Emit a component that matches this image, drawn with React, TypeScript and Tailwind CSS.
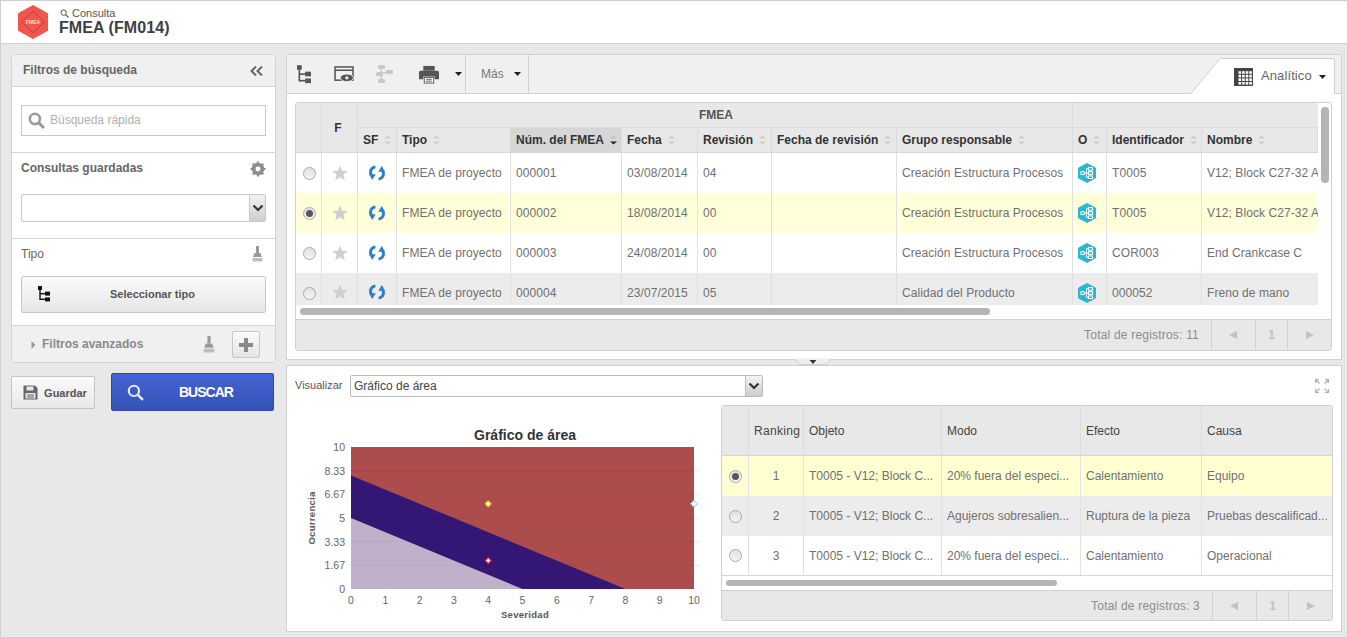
import React from "react";

function Sort({ active = false }: { active?: boolean }) {
  return (
    <svg width="9" height="10" viewBox="0 0 9 10" className="shrink-0">
      <path d="M4.5 0.5 L8 3.5 H1 Z" fill={active ? "#c4c4c4" : "#cccccc"} />
      <path d="M1 6.5 H8 L4.5 9.5 Z" fill={active ? "#222" : "#cccccc"} />
    </svg>
  );
}

function Radio({ on = false }: { on?: boolean }) {
  return (
    <span className="flex h-[13px] w-[13px] items-center justify-center rounded-full border border-[#a9a9a9] bg-linear-to-b from-[#e2e2e2] to-[#f4f4f4]">
      {on && <span className="h-[7px] w-[7px] rounded-full bg-[#555]" />}
    </span>
  );
}

function Star() {
  return (
    <svg width="16" height="16" viewBox="0 0 16 16">
      <path d="M8 0.5 L10.2 5.7 L15.7 6.1 L11.5 9.7 L12.8 15.2 L8 12.3 L3.2 15.2 L4.5 9.7 L0.3 6.1 L5.8 5.7 Z" fill="#cfcfcf" />
    </svg>
  );
}

function Sync() {
  return (
    <svg width="16" height="16" viewBox="0 0 17 18" fill="none" preserveAspectRatio="none" className="-ml-[1px]">
      <path d="M6.8 2.2 C2.2 3 0.4 7.4 2.6 11.5" stroke="#2d7fc9" strokeWidth="3.2" />
      <path d="M0 10.4 L7.2 10.4 L3.4 17 Z" fill="#2d7fc9" />
      <path d="M10.2 15.8 C14.8 15 16.6 10.6 14.4 6.5" stroke="#2d7fc9" strokeWidth="3.2" />
      <path d="M17 7.6 L9.8 7.6 L13.6 1 Z" fill="#2d7fc9" />
    </svg>
  );
}

function ObjIcon() {
  return (
    <svg width="18" height="20" viewBox="0 0 18 20">
      <path d="M9 0.5 L17.5 5 V15 L9 19.5 L0.5 15 V5 Z" fill="#2bb8d0" stroke="#2bb8d0" strokeWidth="1" strokeLinejoin="round" />
      <g fill="none" stroke="#fff" strokeWidth="1">
        <rect x="3" y="8.5" width="3" height="3" />
        <rect x="10.5" y="4.5" width="4" height="2.6" />
        <rect x="10.5" y="8.7" width="4" height="2.6" />
        <rect x="10.5" y="12.9" width="4" height="2.6" />
        <path d="M6 10 H10.5 M8.5 5.8 V14.2 H10.5 M8.5 5.8 H10.5" />
      </g>
    </svg>
  );
}

function Broom({ w = 11, h = 16 }: { w?: number; h?: number }) {
  return (
    <svg width={w} height={h} viewBox="0 0 11 16">
      <rect x="4" y="0" width="3" height="7" fill="#9a9a9a" />
      <path d="M2.5 7 H8.5 L10 11 H1 Z" fill="#9a9a9a" />
      <rect x="0.5" y="12" width="10" height="3.5" fill="#bdbdbd" />
    </svg>
  );
}

function Magnifier({ size, color, stroke = 2 }: { size: number; color: string; stroke?: number }) {
  return (
    <svg width={size} height={size} viewBox="0 0 16 16" fill="none">
      <circle cx="6.5" cy="6.5" r="4.8" stroke={color} strokeWidth={stroke} />
      <path d="M10 10 L15 15" stroke={color} strokeWidth={stroke + 0.4} />
    </svg>
  );
}

function TreeIcon({ color = "#111", w = 12, h = 16 }: { color?: string; w?: number; h?: number }) {
  return (
    <svg width={w} height={h} viewBox="0 0 12 16">
      <rect x="0" y="0" width="4" height="4" fill={color} />
      <rect x="1.3" y="4" width="1.4" height="10" fill={color} />
      <rect x="2" y="7" width="6" height="1.4" fill={color} />
      <rect x="2" y="12.6" width="6" height="1.4" fill={color} />
      <rect x="7" y="5.6" width="5" height="4" fill={color} />
      <rect x="7" y="11.4" width="5" height="4" fill={color} />
    </svg>
  );
}

function Caret() {
  return (
    <svg width="7" height="4" viewBox="0 0 7 4">
      <path d="M0 0 H7 L3.5 4 Z" fill="#222" />
    </svg>
  );
}

function Chevron() {
  return (
    <svg width="12" height="8" viewBox="0 0 12 8" fill="none">
      <path d="M1.5 1.5 L6 6 L10.5 1.5" stroke="#333" strokeWidth="2.2" />
    </svg>
  );
}

const topCols = [26, 36, 39, 114, 111, 76, 74, 125, 176, 34, 95, 116];
const topHead = ["SF", "Tipo", "Núm. del FMEA", "Fecha", "Revisión", "Fecha de revisión", "Grupo responsable", "O", "Identificador", "Nombre"];
const topRows = [
  ["FMEA de proyecto", "000001", "03/08/2014", "04", "", "Creación Estructura Procesos", "T0005", "V12; Block C27-32 A"],
  ["FMEA de proyecto", "000002", "18/08/2014", "00", "", "Creación Estructura Procesos", "T0005", "V12; Block C27-32 A"],
  ["FMEA de proyecto", "000003", "24/08/2014", "00", "", "Creación Estructura Procesos", "COR003", "End Crankcase C"],
  ["FMEA de proyecto", "000004", "23/07/2015", "05", "", "Calidad del Producto", "000052", "Freno de mano"],
];

function TopRow({ r, i }: { r: string[]; i: number }) {
  const bg = i === 1 ? "bg-[#ffffd9]" : i === 3 ? "bg-[#ececec]" : "bg-white";
  const h = i === 3 ? "h-[32px]" : "h-[40px]";
  const cell = "shrink-0 overflow-hidden whitespace-nowrap border-r border-[#e0e0e0] flex items-center tracking-[0.07px]";
  return (
    <div className={`flex ${bg} ${h}`}>
      <div className={`${cell} justify-center`} style={{ width: topCols[0] }}><span className={`ml-[1px] ${i === 3 ? "mt-[8px]" : ""}`}><Radio on={i === 1} /></span></div>
      <div className={`${cell} justify-center`} style={{ width: topCols[1] }}><span className={i === 3 ? "mt-[6px]" : ""}><Star /></span></div>
      <div className={`${cell} justify-center`} style={{ width: topCols[2] }}><span className={i === 3 ? "mt-[6px]" : ""}><Sync /></span></div>
      {[0, 1, 2, 3, 4, 5].map((k) => (
        <div key={k} className={`${cell} pl-[5px] ${i === 3 ? "pt-[7px]" : ""}`} style={{ width: topCols[3 + k] }}>{r[k]}</div>
      ))}
      <div className={`${cell} justify-center pr-[5px]`} style={{ width: topCols[9] }}><span className={i === 3 ? "mt-[7px]" : ""}><ObjIcon /></span></div>
      <div className={`${cell} pl-[5px] ${i === 3 ? "pt-[7px]" : ""}`} style={{ width: topCols[10] }}>{r[6]}</div>
      <div className={`shrink-0 overflow-hidden whitespace-nowrap flex items-center pl-[5px] tracking-[0.07px] ${i === 3 ? "pt-[7px]" : ""}`} style={{ width: topCols[11] }}>{r[7]}</div>
    </div>
  );
}

function Pager({ text }: { text: string }) {
  return (
    <div className="flex h-full items-stretch justify-end text-[12px] text-[#8c8c8c]">
      <div className="flex items-center pr-[12px] tracking-[0.2px]">{text}</div>
      <div className="flex w-[44px] items-center justify-center border-l border-[#d2d2d2]">
        <svg width="9" height="8" viewBox="0 0 9 8"><path d="M8 0 V8 L0 4 Z" fill="#c2c2c2" /></svg>
      </div>
      <div className="flex w-[32px] items-center justify-center border-l border-[#d2d2d2] font-bold text-[#c2c2c2]">1</div>
      <div className="flex w-[44px] items-center justify-center border-l border-[#d2d2d2]">
        <svg width="9" height="8" viewBox="0 0 9 8"><path d="M1 0 V8 L9 4 Z" fill="#c2c2c2" /></svg>
      </div>
    </div>
  );
}

const botCols = [27, 55, 138, 139, 121, 131];
const botRows = [
  ["1", "T0005 - V12; Block C...", "20% fuera del especi...", "Calentamiento", "Equipo"],
  ["2", "T0005 - V12; Block C...", "Agujeros sobresalien...", "Ruptura de la pieza", "Pruebas descalificad..."],
  ["3", "T0005 - V12; Block C...", "20% fuera del especi...", "Calentamiento", "Operacional"],
];

function Chart() {
  const x = (v: number) => 61 + v * 34.3;
  const y = (v: number) => 169 - v * 14.2;
  const xs = [0, 1, 2, 3, 4, 5, 6, 7, 8, 9, 10];
  const ys = ["0", "1.67", "3.33", "5", "6.67", "8.33", "10"];
  return (
    <svg width="431" height="210" viewBox="0 0 431 210">
      <text x="235" y="20" textAnchor="middle" fontSize="14" fontWeight="700" fill="#333">Gráfico de área</text>
      <rect x={x(0)} y={y(10)} width="343" height="142" fill="#ac4c4c" />
      <path d={`M${x(0)} ${y(8)} L${x(8)} ${y(0)} L${x(0)} ${y(0)} Z`} fill="#341674" />
      <path d={`M${x(0)} ${y(5)} L${x(5)} ${y(0)} L${x(0)} ${y(0)} Z`} fill="#c0b0c9" />
      {ys.slice(1, 6).map((_, i) => {
        const p = y((i + 1) * 1.667);
        return (
          <g key={i}>
            <line x1={x(0)} x2={x(10)} y1={p} y2={p} stroke="#000" strokeOpacity="0.05" />
            <line x1={x(10)} x2={x(10) + 6} y1={p} y2={p} stroke="#ececec" />
          </g>
        );
      })}
      {ys.map((t, i) => (
        <text key={t} x="55" y={y(i * 1.667) + 4} textAnchor="end" fontSize="10.5" fill="#666">{t}</text>
      ))}
      {xs.map((t) => (
        <text key={t} x={x(t)} y="184" textAnchor="middle" fontSize="10.5" fill="#666">{t}</text>
      ))}
      <text x="235" y="198" textAnchor="middle" fontSize="9.5" fontWeight="700" letterSpacing="0.3" fill="#555">Severidad</text>
      <text transform="translate(25 98) rotate(-90)" textAnchor="middle" fontSize="9.5" fontWeight="700" letterSpacing="0.3" fill="#555">Ocurrencia</text>
      <path d={`M${x(4)} ${y(6) - 3} l3 3 l-3 3 l-3 -3 Z`} fill="#fff" stroke="#f0c000" strokeWidth="1.2" />
      <path d={`M${x(4)} ${y(2) - 3} l3 3 l-3 3 l-3 -3 Z`} fill="#fff" stroke="#e81030" strokeWidth="1.2" />
      <path d={`M${x(10)} ${y(6) - 3.5} l3.5 3.5 l-3.5 3.5 l-3.5 -3.5 Z`} fill="#fff" stroke="#60d0e8" strokeWidth="1" />
    </svg>
  );
}

export default function App() {
  return (
    <div className="flex h-[638px] w-[1348px] flex-col overflow-hidden border border-[#cfcfcf] bg-[#e8e8e8] text-[12px] text-[#707070] [font-family:Liberation_Sans,Arial,sans-serif]">
      {/* Header */}
      <div className="flex h-[43px] shrink-0 items-center border-b border-[#d0d0d0] bg-white pl-[16px]">
        <svg width="32" height="34" viewBox="0 0 32 34">
          <path d="M16 0.5 L30.5 8.5 V25.5 L16 33.5 L1.5 25.5 V8.5 Z" fill="#f0564d" stroke="#f0564d" strokeLinejoin="round" strokeWidth="1" />
          <path d="M16 6 L27.5 17 L16 28 L4.5 17 Z" fill="none" stroke="#c23c36" strokeWidth="1" />
          <text x="16" y="19" textAnchor="middle" fontSize="5" fontWeight="700" fill="#ffd9d6">FMEA</text>
        </svg>
        <div className="ml-[10px] mt-[-2px] flex flex-col">
          <div className="flex h-[13px] translate-y-[1px] items-center gap-[3px] pl-[1px] text-[11px] leading-[13px] text-[#555]">
            <Magnifier size={9} color="#444" stroke={1.6} />
            <span>Consulta</span>
          </div>
          <div className="h-[17px] text-[16px] font-bold leading-[17px] tracking-[0.08px] text-[#404040]">FMEA (FM014)</div>
        </div>
      </div>

      {/* Body */}
      <div className="flex pl-[10px] pt-[10px]">
        {/* Left column */}
        <div className="flex w-[265px] shrink-0 flex-col">
          <div className="h-[309px] overflow-hidden rounded-[3px] border border-[#d4d4d4] bg-white">
            <div className="flex h-[32px] items-center justify-between border-b border-[#d4d4d4] bg-[#f0f0f0] pl-[11px] pr-[12px]">
              <span className="-mt-[2px] font-bold text-[#666]">Filtros de búsqueda</span>
              <svg width="13" height="10" viewBox="0 0 13 10" fill="none">
                <path d="M6 0.5 L1.5 5 L6 9.5 M12 0.5 L7.5 5 L12 9.5" stroke="#666" strokeWidth="2" />
              </svg>
            </div>
            <div className="flex h-[66px] items-start border-b border-[#d4d4d4] px-[9px] pt-[18px]">
              <div className="flex h-[31px] w-full items-center border border-[#c8c8c8] bg-white pl-[6px]">
                <Magnifier size={17} color="#9a9a9a" stroke={2.4} />
                <span className="-mt-[2px] ml-[5px] text-[#b0b0b0]">Búsqueda rápida</span>
              </div>
            </div>
            <div className="h-[86px] border-b border-[#d4d4d4] px-[9px]">
              <div className="flex h-[32px] items-center justify-between">
                <span className="-mt-[2px] font-bold text-[#666]">Consultas guardadas</span>
                <svg width="16" height="16" viewBox="0 0 16 16">
                  <circle cx="8" cy="8" r="4.6" fill="none" stroke="#8e8e8e" strokeWidth="3.4" />
                  <path d="M8 0.5 V15.5 M0.5 8 H15.5 M2.7 2.7 L13.3 13.3 M13.3 2.7 L2.7 13.3" stroke="#8e8e8e" strokeWidth="2.2" />
                  <circle cx="8" cy="8" r="2.4" fill="#fff" />
                </svg>
              </div>
              <div className="mt-[9px] flex h-[28px] items-stretch overflow-hidden rounded-[2px] border border-[#c8c8c8] bg-white">
                <div className="flex-1" />
                <div className="flex w-[16px] items-center justify-center border-l border-[#c8c8c8] bg-linear-to-b from-[#f2f2f2] to-[#cfcfcf]"><Chevron /></div>
              </div>
            </div>
            <div className="h-[87px] border-b border-[#d4d4d4] px-[9px]">
              <div className="flex h-[30px] items-center justify-between pr-[3px]">
                <span className="text-[#666]">Tipo</span>
                <Broom />
              </div>
              <div className="relative mt-[7px] flex h-[37px] items-center justify-center rounded-[2px] border border-[#c8c8c8] bg-linear-to-b from-[#fbfbfb] to-[#e6e6e6] pl-[18px]">
                <span className="absolute left-[16px] top-[9px]"><TreeIcon /></span>
                <span className="text-[11px] font-bold text-[#555]">Seleccionar tipo</span>
              </div>
            </div>
            <div className="flex h-[37px] items-center bg-[#f0f0f0] pl-[19px] pr-[15px]">
              <svg width="5" height="8" viewBox="0 0 5 8"><path d="M0.5 0 L4.5 4 L0.5 8 Z" fill="#999" /></svg>
              <span className="-mt-[2px] ml-[6px] flex-1 font-bold text-[#8a8a8a]">Filtros avanzados</span>
              <Broom w={12} h={17} />
              <div className="ml-[17px] flex h-[27px] w-[28px] items-center justify-center rounded-[2px] border border-[#c8c8c8] bg-linear-to-b from-[#fbfbfb] to-[#e4e4e4]">
                <svg width="14" height="14" viewBox="0 0 14 14"><path d="M5 0 H9 V5 H14 V9 H9 V14 H5 V9 H0 V5 H5 Z" fill="#8a8a8a" /></svg>
              </div>
            </div>
          </div>
          <div className="mt-[10px] flex items-start justify-between pr-[2px]">
            <div className="mt-[3px] flex h-[33px] w-[84px] items-center justify-center gap-[6px] rounded-[2px] border border-[#c4c4c4] bg-linear-to-b from-[#fbfbfb] to-[#e8e8e8] pl-[4px]">
              <svg width="15" height="15" viewBox="0 0 15 15">
                <path d="M0.5 0.5 H12 L14.5 3 V14.5 H0.5 Z" fill="#666" />
                <rect x="3.5" y="1.5" width="7" height="4" fill="#e8e8e8" />
                <rect x="2.5" y="8" width="10" height="5.5" fill="#e8e8e8" />
                <path d="M4 10 H11 M4 12 H11" stroke="#666" />
              </svg>
              <span className="mt-[2px] text-[11px] font-bold text-[#555]">Guardar</span>
            </div>
            <div className="flex h-[38px] w-[163px] items-center rounded-[2px] border border-[#2e4aa6] bg-linear-to-b from-[#4263d4] to-[#3553b4] pl-[15px]">
              <Magnifier size={17} color="#e6ecff" />
              <span className="ml-[35px] text-[14px] font-bold tracking-[-1px] text-white">BUSCAR</span>
            </div>
          </div>
        </div>

        {/* Right column */}
        <div className="ml-[10px] flex w-[1056px] shrink-0 flex-col">
          {/* Top panel */}
          <div className="h-[306px] overflow-hidden rounded-t-[3px] border border-[#d0d0d0] bg-white">
            <div className="relative flex h-[39px] items-stretch border-b border-[#d0d0d0] bg-[#f0f0f0]">
              <div className="flex w-[179px] items-center border-r border-[#d0d0d0] pl-[10px]">
                <TreeIcon color="#555" w={14} h={19} />
                <svg className="ml-[23px]" width="21" height="17" viewBox="0 0 22 18" fill="none">
                  <rect x="1" y="1" width="19" height="14" stroke="#555" strokeWidth="1.6" />
                  <path d="M1 4.5 H20" stroke="#555" strokeWidth="1.6" />
                  <ellipse cx="13.5" cy="12.5" rx="7" ry="4" fill="#555" stroke="#f0f0f0" />
                  <circle cx="13.5" cy="12.5" r="1.7" fill="#f0f0f0" />
                </svg>
                <svg className="ml-[21px]" width="17" height="18" viewBox="0 0 17 18">
                  <g fill="#c8c8c8">
                    <rect x="2" y="0" width="7" height="4" rx="1.5" />
                    <rect x="0" y="7" width="7" height="4" rx="1.5" />
                    <rect x="10" y="5" width="7" height="4" rx="1" />
                    <rect x="2" y="14" width="7" height="4" rx="1.5" />
                    <path d="M4.5 3 H6 V15 H4.5 Z M5 7 H13 V8.2 H5 Z" />
                  </g>
                </svg>
                <svg className="ml-[25px]" width="22" height="19" viewBox="0 0 22 20">
                  <rect x="5" y="1" width="12" height="5" fill="#555" />
                  <path d="M2 6 H20 Q21.5 6 21.5 8 V15 H17 V12 H5 V15 H0.5 V8 Q0.5 6 2 6 Z" fill="#555" />
                  <rect x="6" y="13" width="10" height="6" fill="#fff" stroke="#555" />
                  <path d="M8 15 H14 M8 17 H14" stroke="#555" />
                </svg>
                <span className="ml-[15px]"><Caret /></span>
              </div>
              <div className="flex w-[63px] items-center border-r border-[#d0d0d0] pl-[15px]">
                <span className="text-[#777]">Más</span>
                <span className="ml-[10px]"><Caret /></span>
              </div>
              <div className="flex-1" />
              <div className="absolute bottom-[-1px] right-[6px] top-[3px] flex w-[144px] items-center">
                <svg className="absolute left-0 top-0" width="32" height="36" viewBox="0 0 32 36">
                  <path d="M0 36 L29 0 H32 V36 Z" fill="#fff" />
                  <path d="M0 35.5 L29 0.5 H32" fill="none" stroke="#d0d0d0" />
                </svg>
                <div className="ml-[32px] flex h-full flex-1 items-center rounded-tr-[3px] border-r border-t border-[#d0d0d0] bg-white pl-[11px]">
                  <svg width="19" height="18" viewBox="0 0 19 18">
                    <rect x="0" y="0" width="19" height="18" fill="#444" />
                    <g fill="#fff">
                      {[0, 1, 2, 3].map((a) => [0, 1, 2, 3].map((b) => (
                        <rect key={`${a}${b}`} x={4.5 + a * 3.6} y={3.2 + b * 3.6} width="2.6" height="2.6" />
                      )))}
                    </g>
                  </svg>
                  <span className="-mt-[2px] ml-[8px] text-[13px] tracking-[0.1px] text-[#666]">Analítico</span>
                  <span className="ml-[7px]"><Caret /></span>
                </div>
              </div>
            </div>

            {/* Grid */}
            <div className="ml-[8px] mr-[9px] mt-[8px] h-[249px] overflow-hidden rounded-[3px] border border-[#d0d0d0]">
              <div className="relative h-[216px] overflow-hidden bg-white">
                <div className="w-[1022px] overflow-hidden">
                  <div className="flex h-[50px] w-[1022px] border-b border-[#d6d6d6] bg-[#e8e8e8] font-bold text-[#333]">
                    <div className="shrink-0 border-r border-[#dcdcdc]" style={{ width: topCols[0] }} />
                    <div className="flex shrink-0 items-center justify-center border-r border-[#dcdcdc] pr-[3px]" style={{ width: topCols[1] }}>F</div>
                    <div className="flex-1">
                      <div className="flex h-[25px] border-b border-[#dcdcdc]">
                        <div className="flex w-[715px] items-center justify-center border-r border-[#dcdcdc] pl-[2px] text-[#555]">FMEA</div>
                      </div>
                      <div className="flex h-[24px]">
                        {topHead.map((h, i) => (
                          <div
                            key={h}
                            className={`flex shrink-0 items-center gap-[5px] overflow-hidden whitespace-nowrap border-r border-[#dcdcdc] pl-[5px] ${i === 2 ? "bg-[#d6d6d6]" : ""}`}
                            style={{ width: topCols[i + 2] }}
                          >
                            {h}
                            <Sort active={i === 2} />
                          </div>
                        ))}
                      </div>
                    </div>
                  </div>
                  {topRows.map((r, i) => <TopRow key={i} r={r} i={i} />)}
                </div>
                <div className="absolute left-[4px] top-[205px] h-[7px] w-[690px] rounded-full bg-[#b4b4b4]" />
                <div className="absolute right-[2px] top-[4px] h-[76px] w-[8px] rounded-full bg-[#b4b4b4]" />
              </div>
              <div className="h-[31px] border-t border-[#d0d0d0] bg-[#e8e8e8]">
                <Pager text="Total de registros: 11" />
              </div>
            </div>
          </div>

          {/* Splitter */}
          <div className="relative h-[5px] shrink-0">
            <svg className="absolute left-[509px] top-[-2px]" width="36" height="7" viewBox="0 0 36 7">
              <path d="M0 0.5 L4 6.5 H32 L36 0.5" fill="#eeeeee" stroke="#cfcfcf" />
              <path d="M14.5 2 H21.5 L18 6 Z" fill="#333" />
            </svg>
          </div>

          {/* Bottom panel */}
          <div className="h-[267px] overflow-hidden border border-[#d0d0d0] bg-white">
            <div className="flex h-[39px] items-center pl-[8px] pr-[12px]">
              <span className="w-[55px] text-[11px] text-[#555]">Visualizar</span>
              <div className="flex h-[22px] w-[413px] items-stretch rounded-[2px] border border-[#b9b9cc] bg-white">
                <span className="flex flex-1 items-center pl-[3px] text-[#444]">Gráfico de área</span>
                <div className="flex w-[17px] items-center justify-center border-l border-[#b9b9cc] bg-linear-to-b from-[#f4f4f4] to-[#cccccc]"><Chevron /></div>
              </div>
              <div className="flex-1" />
              <svg width="14" height="14" viewBox="0 0 14 14" fill="none" stroke="#b0b0b0" strokeWidth="1.2">
                <path d="M0.5 4 V0.5 H4 M0.5 0.5 L4.5 4.5 M13.5 4 V0.5 H10 M13.5 0.5 L9.5 4.5 M0.5 10 V13.5 H4 M0.5 13.5 L4.5 9.5 M13.5 10 V13.5 H10 M13.5 13.5 L9.5 9.5" />
              </svg>
            </div>
            <div className="flex items-start">
              <div className="mt-[15px] w-[434px] shrink-0 pl-[3px]"><Chart /></div>
              <div className="h-[216px] w-[612px] shrink-0 overflow-hidden rounded-[3px] border border-[#d0d0d0]">
                <div className="flex h-[50px] border-b border-[#d6d6d6] bg-[#e8e8e8] text-[#444]">
                  {["", "Ranking", "Objeto", "Modo", "Efecto", "Causa"].map((h, i) => (
                    <div key={i} className={`flex shrink-0 items-center border-r border-[#dcdcdc] pl-[5px] last:border-r-0 ${i === 1 ? "tracking-[0.3px]" : ""}`} style={{ width: botCols[i] }}>{h}</div>
                  ))}
                </div>
                {botRows.map((r, i) => (
                  <div key={i} className={`flex ${i === 2 ? "h-[39px]" : "h-[40px]"} ${i === 0 ? "bg-[#ffffd2]" : i === 1 ? "bg-[#ececec]" : "bg-white"}`}>
                    <div className="flex shrink-0 items-center justify-center border-r border-[#e2e2e2]" style={{ width: botCols[0] }}><Radio on={i === 0} /></div>
                    <div className="flex shrink-0 items-center justify-center border-r border-[#e2e2e2]" style={{ width: botCols[1] }}>{r[0]}</div>
                    {[1, 2, 3, 4].map((k) => (
                      <div key={k} className="flex shrink-0 items-center overflow-hidden whitespace-nowrap border-r border-[#e2e2e2] pl-[5px] last:border-r-0" style={{ width: botCols[k + 1] }}>{r[k]}</div>
                    ))}
                  </div>
                ))}
                <div className="h-[15px] border-t border-[#d6d6d6] bg-white pl-[4px] pt-[4px]">
                  <div className="h-[6px] w-[331px] rounded-full bg-[#b4b4b4]" />
                </div>
                <div className="h-[31px] border-t border-[#d0d0d0] bg-[#e8e8e8]">
                  <Pager text="Total de registros: 3" />
                </div>
              </div>
            </div>
          </div>
        </div>
      </div>
    </div>
  );
}
